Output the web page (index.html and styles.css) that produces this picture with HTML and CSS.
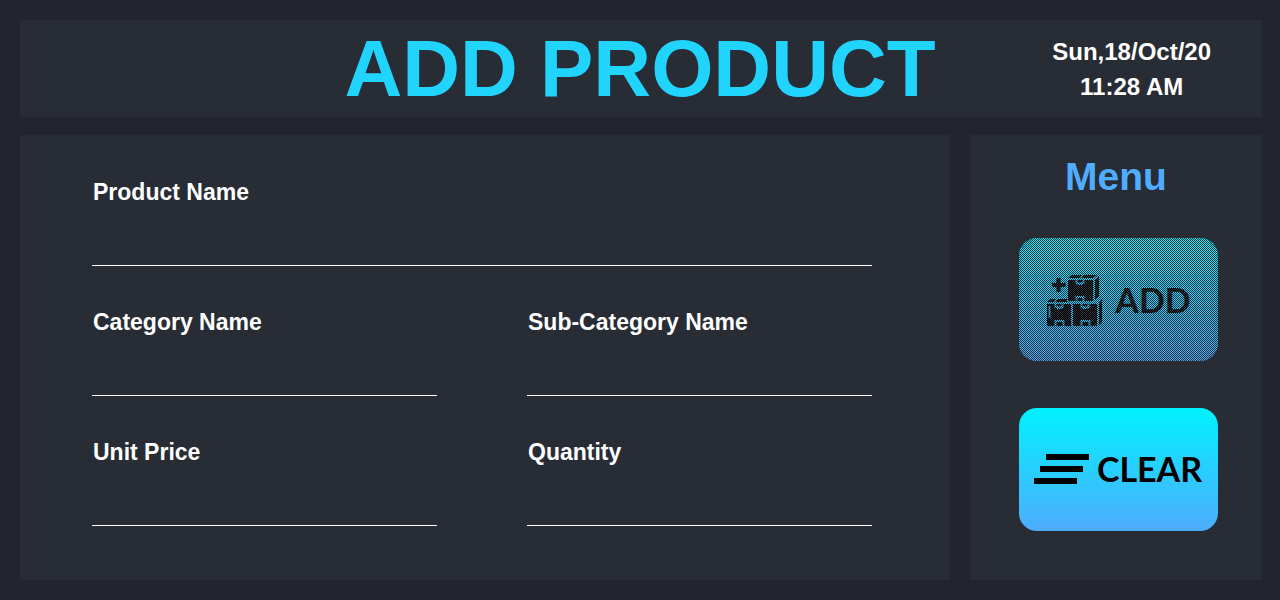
FILE: index.html
```html
<!DOCTYPE html>
<html lang="en">
<head>
<meta charset="utf-8">
<meta name="viewport" content="width=device-width, initial-scale=1">
<title>Add Product</title>
<link rel="stylesheet" href="styles.css">
</head>
<body>
<div class="page">
  <header class="topbar">
    <h1 class="title">ADD PRODUCT</h1>
    <div class="clock">
      <div>Sun,18/Oct/20</div>
      <div>11:28 AM</div>
    </div>
  </header>
  <div class="content">
    <form class="panel form" id="product-form">
      <div class="field wide">
        <label for="product">Product Name</label>
        <input id="product" type="text">
      </div>
      <div class="field">
        <label for="category">Category Name</label>
        <input id="category" type="text">
      </div>
      <div class="field">
        <label for="subcategory">Sub-Category Name</label>
        <input id="subcategory" type="text">
      </div>
      <div class="field">
        <label for="price">Unit Price</label>
        <input id="price" type="text">
      </div>
      <div class="field">
        <label for="quantity">Quantity</label>
        <input id="quantity" type="text">
      </div>
    </form>
    <aside class="panel menu">
      <h2 class="menu-title">Menu</h2>
      <div class="actions">
        <button class="action add" type="submit" form="product-form" disabled>
          <svg width="56" height="52" viewBox="0 0 56 52" aria-hidden="true">
            <path d="M9.500 3h4v5h5v4h-5v5h-4v-5H5V8h4.500z"/>
            <path d="M21 3l4-3h10l-2 3zM35 3l2-3h13l-4 3zM21 5h25v21H21zM48 5l4-4v20l-4 4z"/>
            <path d="M0 27l4-3h5l-2 3zM9 27l2-3h9v3zM0 29h24v22H0zM26 29h24v22H26zM52 28l3-4v23l-3 3z"/>
            <g class="tape">
              <path d="M29.500 5v3h2v1h3v-1h2V5M29.500 26v-4h7v4"/>
              <path d="M8.500 29v3h2v1h3v-1h2v-3M8.500 51v-5h8v5"/>
              <path d="M34.500 29v3h2v1h3v-1h2v-3M34.500 51v-5h8v5"/>
              <path d="M2.500 31v12"/>
            </g>
          </svg>
          <span>ADD</span>
        </button>
        <button class="action clear" type="reset" form="product-form">
          <svg width="56" height="31" viewBox="0 0 56 31" aria-hidden="true">
            <path d="M13 0h43v6H13zM7 12h43v6H7zM1 24h43v6H1z"/>
          </svg>
          <span>CLEAR</span>
        </button>
      </div>
    </aside>
  </div>
</div>
</body>
</html>
```
FILE: styles.css
```css
* {
  box-sizing: border-box;
}

body {
  margin: 0;
  background: #22252d;
  color: #fff;
  font-family: "Liberation Sans", Arial, sans-serif;
  font-weight: bold;
}

.page {
  display: flex;
  flex-direction: column;
  gap: 18px;
  padding: 20px 18px 20px 20px;
}

.topbar,
.panel {
  background: #282c35;
}

.topbar {
  display: grid;
  grid-template-columns: 1fr auto 1fr;
  align-items: center;
  min-height: 97px;
}

.title {
  grid-column: 2;
  margin: 0;
  padding-right: 2px;
  color: #21d4fd;
  font-size: 80px;
  line-height: 90px;
}

.clock {
  justify-self: end;
  padding-right: 51px;
  font-size: 24px;
  line-height: 35px;
  text-align: center;
}

.content {
  display: grid;
  grid-template-columns: 1fr 292px;
  gap: 20px;
}

.form {
  display: grid;
  grid-template-columns: 1fr 1fr;
  gap: 43px 90px;
  padding: 44px 78px 54px 72px;
}

.field {
  display: flex;
  flex-direction: column;
}

.wide {
  grid-column: 1 / -1;
}

.field label {
  padding-left: 1px;
  font-size: 23px;
  line-height: 26px;
}

.field input {
  width: 100%;
  height: 61px;
  padding: 24px 0 0;
  border: 0;
  border-bottom: 1px solid #fff;
  border-radius: 0;
  outline: 0;
  background: transparent;
  color: #fff;
  font: inherit;
  font-size: 20px;
}

.menu {
  padding-top: 19px;
}

.menu-title {
  margin: 0 0 38px;
  color: #4facfe;
  font-size: 39px;
  line-height: 46px;
  text-align: center;
}

.actions {
  display: flex;
  flex-direction: column;
  gap: 47px;
  padding: 0 44px 49px 49px;
}

.action {
  position: relative;
  display: flex;
  align-items: center;
  justify-content: center;
  height: 123px;
  padding: 0 2px 0 0;
  border: 0;
  border-radius: 18px;
  overflow: hidden;
  background: linear-gradient(#00f2fe, #4facfe);
  color: #000;
  font-family: Lato, Carlito, sans-serif;
  font-size: 34px;
  font-weight: bold;
  line-height: 40px;
}

.action span {
  padding-bottom: 2px;
}

.add {
  gap: 12px;
  padding: 2px 0 0 1px;
}

.clear {
  gap: 8px;
}

.add::after {
  content: "";
  position: absolute;
  inset: 0;
  background: repeating-conic-gradient(#282c35 0 25%, transparent 0 50%) 0 0 / 2px 2px;
}

.tape {
  fill: none;
  stroke: #2bc8fe;
  stroke-width: 2;
}
```
